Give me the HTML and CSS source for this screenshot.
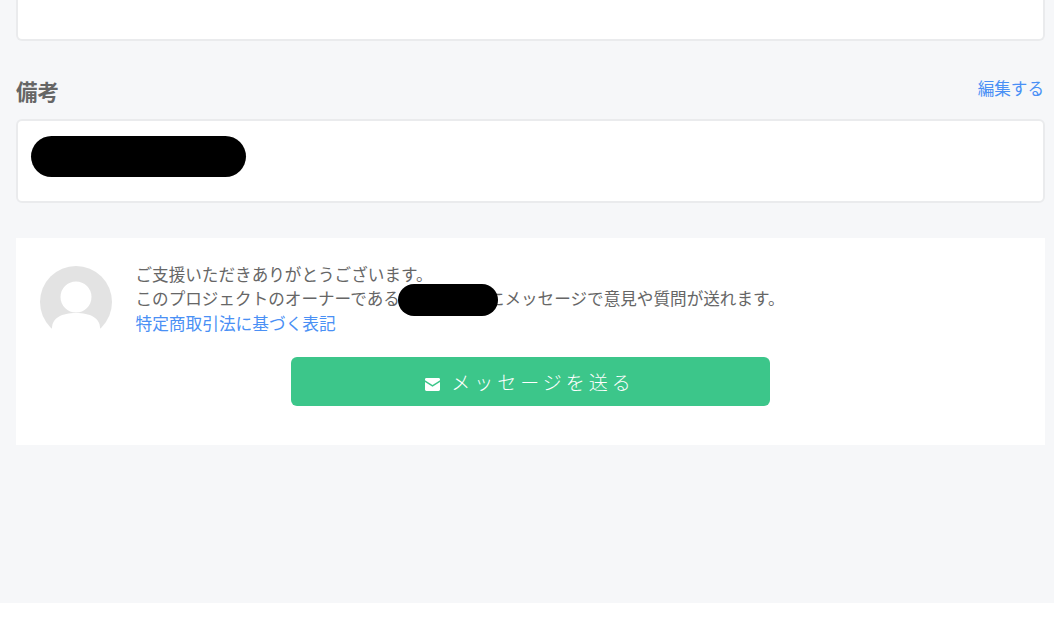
FILE: index.html
```html
<!DOCTYPE html>
<html lang="ja">
<head>
<meta charset="utf-8">
<title>備考</title>
<link rel="stylesheet" href="styles.css">
</head>
<body>
<main class="page">
  <div class="card card-top"></div>
  <div class="section-head">
    <h2 class="section-title">備考</h2>
    <a class="edit-link" href="#">編集する</a>
  </div>
  <div class="card card-note"><span class="pill-note"></span></div>
  <section class="owner">
    <div class="owner-row">
      <svg class="avatar" width="72" height="72" viewBox="0 0 72 72" aria-hidden="true">
        <circle cx="36" cy="36" r="36" fill="#e3e3e3"/>
        <circle cx="36" cy="31" r="15.5" fill="#fff"/>
        <path d="M12 72V62C12 52 22 47 36 47S60 52 60 62V72Z" fill="#fff"/>
      </svg>
      <div class="owner-text">
        <p class="line">ご支援いただきありがとうございます。</p>
        <p class="line">このプロジェクトのオーナーである<span class="owner-name"><span class="pill-name"></span></span>にメッセージで意見や質問が送れます。</p>
        <p class="line"><a class="law-link" href="#">特定商取引法に基づく表記</a></p>
      </div>
    </div>
    <button class="send" type="button">
      <svg class="mail" width="15" height="13" viewBox="0 0 15 13" aria-hidden="true">
        <path d="M1.4 0H13.6C14.4 0 15 .6 15 1.4V2.2L7.5 7 0 2.2V1.4C0 .6.6 0 1.4 0Z" fill="#fff"/>
        <path d="M0 3.9L7.5 8.7 15 3.9V11.6C15 12.4 14.4 13 13.6 13H1.4C.6 13 0 12.4 0 11.6Z" fill="#fff"/>
      </svg>
      <span>メッセージを送る</span>
    </button>
  </section>
</main>
</body>
</html>
```
FILE: styles.css
```css
html, body {
  margin: 0;
  background: #fff;
}
body {
  font-family: "Noto Sans CJK JP", "Noto Sans", sans-serif;
  overflow: hidden;
}
.page {
  box-sizing: border-box;
  height: 603px;
  padding: 0 9px 0 16px;
  background: #f6f7f9;
  overflow: hidden;
}
.card {
  box-sizing: border-box;
  background: #fff;
  border: 2px solid #eaebed;
  border-radius: 6px;
}
.card-top {
  height: 41px;
  border-top: 0;
  border-radius: 0 0 6px 6px;
}
.section-head {
  display: flex;
  justify-content: space-between;
  align-items: flex-start;
  height: 78px;
  box-sizing: border-box;
  padding-top: 35px;
}
.section-title {
  margin: 0;
  font-size: 21.5px;
  line-height: 30px;
  font-weight: 700;
  color: #666;
}
.edit-link {
  margin: 0 1px 0 0;
  font-size: 16.6px;
  line-height: 24px;
  color: #4a90f5;
  text-decoration: none;
}
.card-note {
  display: flex;
  height: 84px;
  padding: 15px 13px;
}
.pill-note {
  width: 215px;
  height: 41px;
  background: #000;
  border-radius: 21px;
}
.owner {
  box-sizing: border-box;
  height: 207px;
  margin-top: 35px;
  padding: 24px 24px 0;
  background: #fff;
}
.owner-row {
  display: flex;
  gap: 23.5px;
}
.avatar {
  flex: none;
  margin-top: 4px;
}
.owner-text {
  margin-top: -0.5px;
  font-size: 16.6px;
  line-height: 24.5px;
  color: #666;
}
.line {
  margin: 0;
  white-space: nowrap;
}
.owner-name {
  position: relative;
  display: inline-block;
  width: 88px;
  height: 1px;
}
.pill-name {
  position: absolute;
  left: -2px;
  top: -20px;
  width: 100px;
  height: 32px;
  background: #000;
  border-radius: 16px;
}
.law-link {
  font-size: 16.7px;
  color: #4a90f5;
  text-decoration: none;
}
.send {
  display: flex;
  align-items: center;
  justify-content: center;
  gap: 11px;
  box-sizing: border-box;
  width: 479px;
  height: 49px;
  margin: 19px 0 0 251px;
  padding: 0 1px 0 0;
  border: 0;
  border-radius: 6px;
  background: #3cc68a;
  color: #fff;
  font-family: inherit;
  font-size: 19px;
  font-weight: 300;
  letter-spacing: 4px;
}
.mail {
  flex: none;
  margin-top: 5px;
}
```
